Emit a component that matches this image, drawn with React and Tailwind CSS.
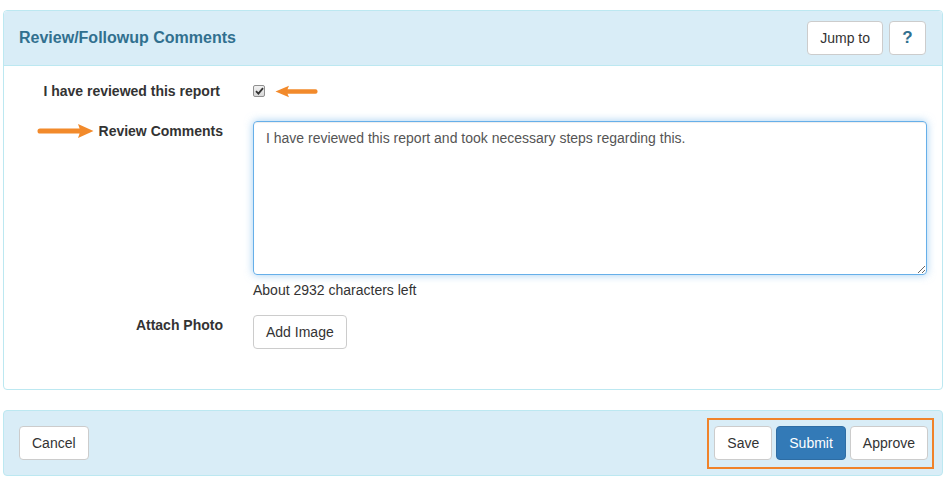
import React from 'react';

function ArrowLeft() {
    return (
        <svg width="43" height="13" viewBox="0 0 43 13" className="block">
            <path d="M0.5 6.5 L14 0.8 L12.5 4.3 L40.5 4.3 Q42.6 4.3 42.6 6.5 Q42.6 8.7 40.5 8.7 L12.5 8.7 L14 12.2 Z" fill="#f28a2b" />
        </svg>
    );
}

function ArrowRight() {
    return (
        <svg width="57" height="16" viewBox="0 0 57 16" className="block">
            <path d="M56.5 8 L41 1 L42.6 5.4 L3 5.4 Q0.5 5.4 0.5 8 Q0.5 10.6 3 10.6 L42.6 10.6 L41 15 Z" fill="#f28a2b" />
        </svg>
    );
}

function Btn({ children, primary, className = '' }) {
    const base = 'h-[34px] px-3 rounded text-sm leading-5 border';
    const style = primary
        ? 'bg-[#337ab7] border-[#2e6da4] text-white'
        : 'bg-white border-[#ccc] text-[#333]';
    return <button type="button" className={`${base} ${style} ${className}`}>{children}</button>;
}

export default function App() {
    return (
        <div className="w-[947px] h-[482px] bg-white pt-[10px] px-[3px] text-[#333] text-sm leading-5" style={{ fontFamily: '"Liberation Sans", Arial, sans-serif' }}>
            {/* Review panel */}
            <div className="w-[940px] border border-[#bce8f1] rounded">
                <div className="h-[55px] bg-[#d9edf7] border-b border-[#bce8f1] rounded-t flex items-center justify-between pl-[15px] pr-[16px]">
                    <h3 className="text-[16px] font-bold text-[#31708f]">Review/Followup Comments</h3>
                    <div className="flex gap-[6px]">
                        <Btn>Jump to</Btn>
                        <Btn className="w-[37px] px-0 font-bold text-[#31708f] text-[17px]">?</Btn>
                    </div>
                </div>

                <div className="pt-[15px] pb-[40px]">
                    <div className="flex items-center h-5">
                        <div className="w-[216px] text-right font-bold">I have reviewed this report</div>
                        <div className="ml-[33px] flex items-center gap-[10px]">
                            <span className="w-[12px] h-[12px] rounded-[2px] border border-[#8f8f8f] bg-gradient-to-b from-[#f2f2f2] to-[#d8d8d8] flex items-center justify-center">
                                <svg width="9" height="8" viewBox="0 0 9 8">
                                    <path d="M1 4.2 L3.4 6.6 L8 1.2" stroke="#333" strokeWidth="1.8" fill="none" />
                                </svg>
                            </span>
                            <ArrowLeft />
                        </div>
                    </div>

                    <div className="flex mt-5">
                        <div className="w-[219px] flex justify-end items-center h-5 gap-[5px] font-bold">
                            <ArrowRight />
                            <span>Review Comments</span>
                        </div>
                        <div className="ml-[30px]">
                            <textarea
                                defaultValue="I have reviewed this report and took necessary steps regarding this."
                                className="block w-[674px] h-[154px] border border-[#66afe9] rounded px-3 py-[6px] text-sm leading-5 text-[#555] outline-none shadow-[inset_0_1px_1px_rgba(0,0,0,0.075),0_0_8px_rgba(102,175,233,0.6)]"
                            />
                            <div className="mt-[5px]">About 2932 characters left</div>
                        </div>
                    </div>

                    <div className="flex mt-[15px]">
                        <div className="w-[219px] text-right font-bold h-5">Attach Photo</div>
                        <div className="ml-[30px]">
                            <Btn>Add Image</Btn>
                        </div>
                    </div>
                </div>
            </div>

            {/* Footer actions */}
            <div className="mt-[20px] w-[940px] h-[66px] bg-[#d9edf7] border border-[#bce8f1] rounded flex items-center justify-between pl-[15px] pr-[8px]">
                <Btn>Cancel</Btn>
                <div className="border-2 border-[#f0832a] pl-[5px] pr-[4px] pt-[6px] pb-[7px] flex gap-[4px]">
                    <Btn>Save</Btn>
                    <Btn primary>Submit</Btn>
                    <Btn>Approve</Btn>
                </div>
            </div>
        </div>
    );
}
